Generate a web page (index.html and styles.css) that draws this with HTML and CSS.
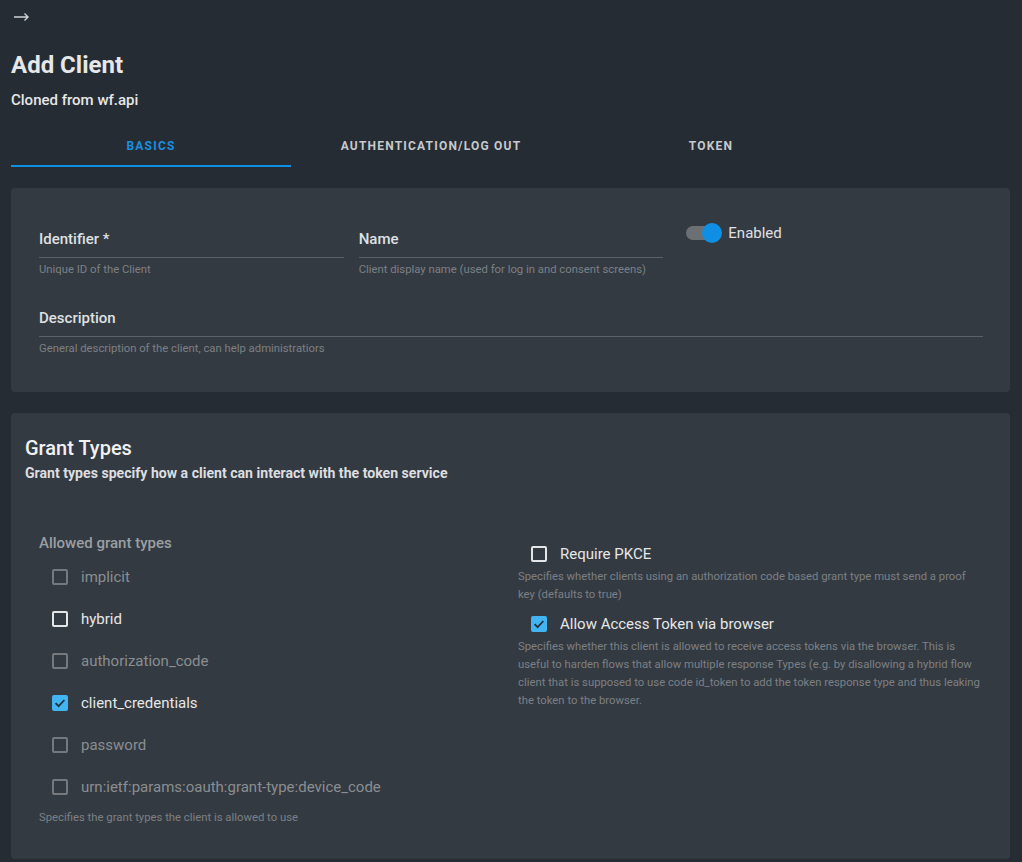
FILE: index.html
```html
<!DOCTYPE html>
<html lang="en">
<head>
<meta charset="utf-8">
<title>Add Client</title>
<link rel="stylesheet" href="styles.css">
</head>
<body>
<div class="page">
  <div class="topbar">
    <svg class="back" width="16" height="10" viewBox="0 0 16 10"><path d="M0 5H14M10.5 1.5L14 5L10.5 8.5" fill="none" stroke="#cfd2d5" stroke-width="1.4"/></svg>
  </div>
  <h1 class="title">Add Client</h1>
  <div class="subtitle">Cloned from wf.api</div>

  <div class="tabs">
    <div class="tab active">BASICS</div>
    <div class="tab">AUTHENTICATION/LOG OUT</div>
    <div class="tab">TOKEN</div>
  </div>

  <section class="card basics">
    <div class="field-grid">
      <div class="field">
        <div class="label">Identifier *</div>
        <div class="line"></div>
        <div class="hint">Unique ID of the Client</div>
      </div>
      <div class="field">
        <div class="label">Name</div>
        <div class="line"></div>
        <div class="hint">Client display name (used for log in and consent screens)</div>
      </div>
      <div class="switch-row">
        <span class="switch"><span class="track"></span><span class="thumb"></span></span>
        <span class="switch-label">Enabled</span>
      </div>
      <div class="field wide">
        <div class="label">Description</div>
        <div class="line"></div>
        <div class="hint">General description of the client, can help administratiors</div>
      </div>
    </div>
  </section>

  <section class="card grants">
    <h2 class="card-title">Grant Types</h2>
    <div class="card-sub">Grant types specify how a client can interact with the token service</div>
    <div class="grant-grid">
      <div class="col-left">
        <div class="group-label">Allowed grant types</div>
        <div class="check-row disabled"><span class="box"></span><span class="text">implicit</span></div>
        <div class="check-row"><span class="box"></span><span class="text">hybrid</span></div>
        <div class="check-row disabled"><span class="box"></span><span class="text">authorization_code</span></div>
        <div class="check-row"><span class="box checked"><svg viewBox="0 0 16 16" width="16" height="16"><path d="M3.6 8.2L6.6 11.1L12.4 5" fill="none" stroke="#26313a" stroke-width="1.8"/></svg></span><span class="text">client_credentials</span></div>
        <div class="check-row disabled"><span class="box"></span><span class="text">password</span></div>
        <div class="check-row disabled"><span class="box"></span><span class="text">urn:ietf:params:oauth:grant-type:device_code</span></div>
        <div class="hint">Specifies the grant types the client is allowed to use</div>
      </div>
      <div class="col-right">
        <div class="opt-row"><span class="box"></span><span class="text">Require PKCE</span></div>
        <div class="hint tall">Specifies whether clients using an authorization code based grant type must send a proof key (defaults to true)</div>
        <div class="opt-row second"><span class="box checked"><svg viewBox="0 0 16 16" width="16" height="16"><path d="M3.6 8.2L6.6 11.1L12.4 5" fill="none" stroke="#26313a" stroke-width="1.8"/></svg></span><span class="text">Allow Access Token via browser</span></div>
        <div class="hint tall">Specifies whether this client is allowed to receive access tokens via the browser. This is useful to harden flows that allow multiple response Types (e.g. by disallowing a hybrid flow client that is supposed to use code id_token to add the token response type and thus leaking the token to the browser.</div>
      </div>
    </div>
  </section>
</div>
</body>
</html>
```

FILE: styles.css
```css
* { box-sizing: border-box; }
html, body {
  margin: 0;
  padding: 0;
  background: #262c33;
  height: 862px;
  overflow: hidden;
}
body {
  font-family: Roboto, "Liberation Sans", Arial, sans-serif;
  color: #e2e3e5;
}
.page {
  padding: 0 12px 0 11px;
}
.topbar {
  height: 32px;
  display: flex;
  align-items: center;
  padding-left: 3px;
}
.back { display: block; margin-top: 1px; }

.title {
  margin: 17px 0 0;
  font-size: 24px;
  line-height: 32px;
  font-weight: 700;
  color: #e6e7e8;
}
.subtitle {
  margin-top: 9px;
  font-size: 15px;
  line-height: 20px;
  font-weight: 500;
  color: #e6e7e8;
}

.tabs {
  margin-top: 9px;
  display: flex;
  height: 48px;
}
.tab {
  width: 280px;
  display: flex;
  align-items: center;
  justify-content: center;
  padding-top: 8px;
  font-size: 12px;
  font-weight: 700;
  letter-spacing: 1.2px;
  color: #c6cacd;
  border-bottom: 2px solid transparent;
}
.tab.active {
  color: #1a8fe0;
  border-bottom-color: #0f8fe3;
}

.card {
  background: #343a41;
  border-radius: 4px;
}
.basics {
  margin-top: 21px;
  padding: 35px 27px 36px 28px;
}
.field-grid {
  display: grid;
  grid-template-columns: 1fr 1fr 1fr;
  column-gap: 15px;
  row-gap: 25px;
  align-items: start;
}
.field .label {
  padding-top: 6px;
  font-size: 15px;
  line-height: 20px;
  font-weight: 500;
  color: #dfe0e2;
}
.field .line {
  margin-top: 8px;
  height: 1px;
  background: #5c6166;
}
.hint {
  font-size: 11.3px;
  line-height: 14px;
  color: #7c8085;
}
.field .hint { margin-top: 5px; }
.field.wide { grid-column: 1 / 4; }

.switch-row {
  display: flex;
  align-items: center;
  height: 20px;
  padding-left: 8px;
}
.switch {
  position: relative;
  width: 36px;
  height: 20px;
  display: inline-block;
}
.track {
  position: absolute;
  left: 0;
  top: 3px;
  width: 34px;
  height: 14px;
  border-radius: 7px;
  background: #6c7074;
}
.thumb {
  position: absolute;
  left: 16px;
  top: 0;
  width: 20px;
  height: 20px;
  border-radius: 50%;
  background: #0f8fe3;
}
.switch-label {
  margin-left: 6px;
  font-size: 15px;
  line-height: 20px;
  color: #e0e1e3;
}

.grants {
  margin-top: 21px;
  padding: 21px 27px 34px 14px;
}
.card-title {
  margin: 0;
  font-size: 20px;
  line-height: 28px;
  font-weight: 500;
  color: #f0f1f2;
}
.card-sub {
  margin-top: 1px;
  font-size: 14.1px;
  line-height: 20px;
  font-weight: 700;
  color: #dcdee0;
}
.grant-grid {
  margin-top: 50px;
  margin-left: 14px;
  display: grid;
  grid-template-columns: 1fr 1fr;
  column-gap: 14px;
  align-items: start;
}
.group-label {
  font-size: 15px;
  line-height: 20px;
  font-weight: 500;
  color: #9b9fa3;
  margin-bottom: 3px;
}
.check-row {
  height: 42px;
  display: flex;
  align-items: center;
  padding-left: 13px;
}
.box {
  width: 16px;
  height: 16px;
  border: 2px solid #e4e5e6;
  border-radius: 2px;
  flex: none;
  display: inline-flex;
}
.box.checked {
  border: none;
  background: #42b4f2;
}
.box svg { display: block; }
.check-row .text, .opt-row .text {
  margin-left: 13px;
  font-size: 15px;
  line-height: 20px;
  color: #e6e7e8;
}
.check-row.disabled .box { border-color: #75797d; }
.check-row.disabled .text { color: #8a8e92; }
.col-left .hint { margin-top: 3px; }

.col-right { margin-top: 7px; }
.opt-row {
  height: 28px;
  display: flex;
  align-items: center;
  padding-left: 13px;
}
.opt-row.second { margin-top: 6px; }
.hint.tall { line-height: 18px; }
```
